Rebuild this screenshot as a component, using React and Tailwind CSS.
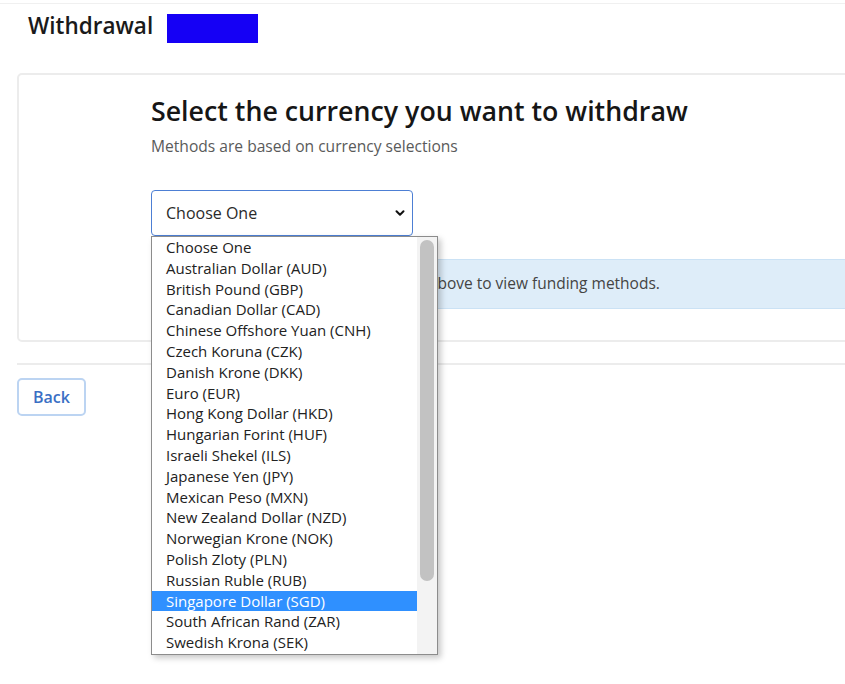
import React from "react";

const currencies = [
  "Choose One",
  "Australian Dollar (AUD)",
  "British Pound (GBP)",
  "Canadian Dollar (CAD)",
  "Chinese Offshore Yuan (CNH)",
  "Czech Koruna (CZK)",
  "Danish Krone (DKK)",
  "Euro (EUR)",
  "Hong Kong Dollar (HKD)",
  "Hungarian Forint (HUF)",
  "Israeli Shekel (ILS)",
  "Japanese Yen (JPY)",
  "Mexican Peso (MXN)",
  "New Zealand Dollar (NZD)",
  "Norwegian Krone (NOK)",
  "Polish Zloty (PLN)",
  "Russian Ruble (RUB)",
  "Singapore Dollar (SGD)",
  "South African Rand (ZAR)",
  "Swedish Krona (SEK)",
];

export default function App() {
  return (
    <div
      className="relative w-[845px] h-[684px] overflow-hidden bg-white text-[#1f1f1f]"
      style={{ fontFamily: "'Open Sans', Lato, sans-serif" }}
    >
      <div className="h-[3px]" />
      <div className="border-t border-[#f0f0f0]" />
      <div className="flex items-start pl-[28px] pt-[10px] h-[69px]">
        <h1 className="text-[22.5px] leading-[28px] font-semibold mt-[-2px] text-[#1a1a1a]">Withdrawal</h1>
        <div className="ml-[14px] w-[91px] h-[29px] bg-[#1500f5]" />
      </div>

      <div className="ml-[17px] w-[840px] border-2 border-[#ececec] rounded-[5px] pl-[132px] pt-[18px] pb-[31px]">
        <h2 className="text-[26.75px] leading-[36px] font-semibold text-[#161616]">
          Select the currency you want to withdraw
        </h2>
        <p className="mt-[7px] text-[15.6px] leading-[20px] text-[#5a5a5a]">
          Methods are based on currency selections
        </p>
        <div className="mt-[34px] w-[262px] h-[46px] border border-[#4d7fd4] rounded-[4px] flex items-center justify-between pl-[14px] pr-[6px] text-[16px] text-[#2a2a2a]">
          <span>Choose One</span>
          <svg width="12" height="12" viewBox="0 0 12 12" fill="none">
            <path d="M2.5 4.2 L6 7.7 L9.5 4.2" stroke="#111" strokeWidth="2" strokeLinecap="round" strokeLinejoin="round" />
          </svg>
        </div>
        <div className="mt-[23px] h-[50px] bg-[#deedf9] border border-[#cbe2f5] flex items-center pl-[9px] text-[15.5px] text-[#444]">
          <span>Please select a currency from the list above to view funding methods.</span>
        </div>
      </div>

      <div className="ml-[17px] mt-[21px] border-t-2 border-[#ececec]" />
      <div className="ml-[17px] mt-[13px]">
        <button className="w-[69px] h-[38px] border-2 border-[#bcd4f2] rounded-[5px] text-[16px] font-semibold text-[#3a6fc4] bg-white">
          Back
        </button>
      </div>

      {/* Open dropdown list */}
      <div className="absolute left-[151px] top-[236px] w-[287px] h-[419px] bg-white border border-[#8c8c8c] shadow-[3px_3px_6px_rgba(0,0,0,0.22)] flex overflow-hidden">
        <div className="flex-1">
          {currencies.map((c) => (
            <div
              key={c}
              className={
                "h-[20.8px] leading-[20.8px] pl-[14px] text-[15px] whitespace-nowrap " +
                (c === "Singapore Dollar (SGD)" ? "bg-[#2f90ff] text-white" : "text-[#222]")
              }
            >
              {c}
            </div>
          ))}
        </div>
        <div className="w-[20px] bg-[#f3f3f3] flex justify-center pt-[3px]">
          <div className="w-[14px] h-[341px] rounded-full bg-[#c2c2c2]" />
        </div>
      </div>
    </div>
  );
}
